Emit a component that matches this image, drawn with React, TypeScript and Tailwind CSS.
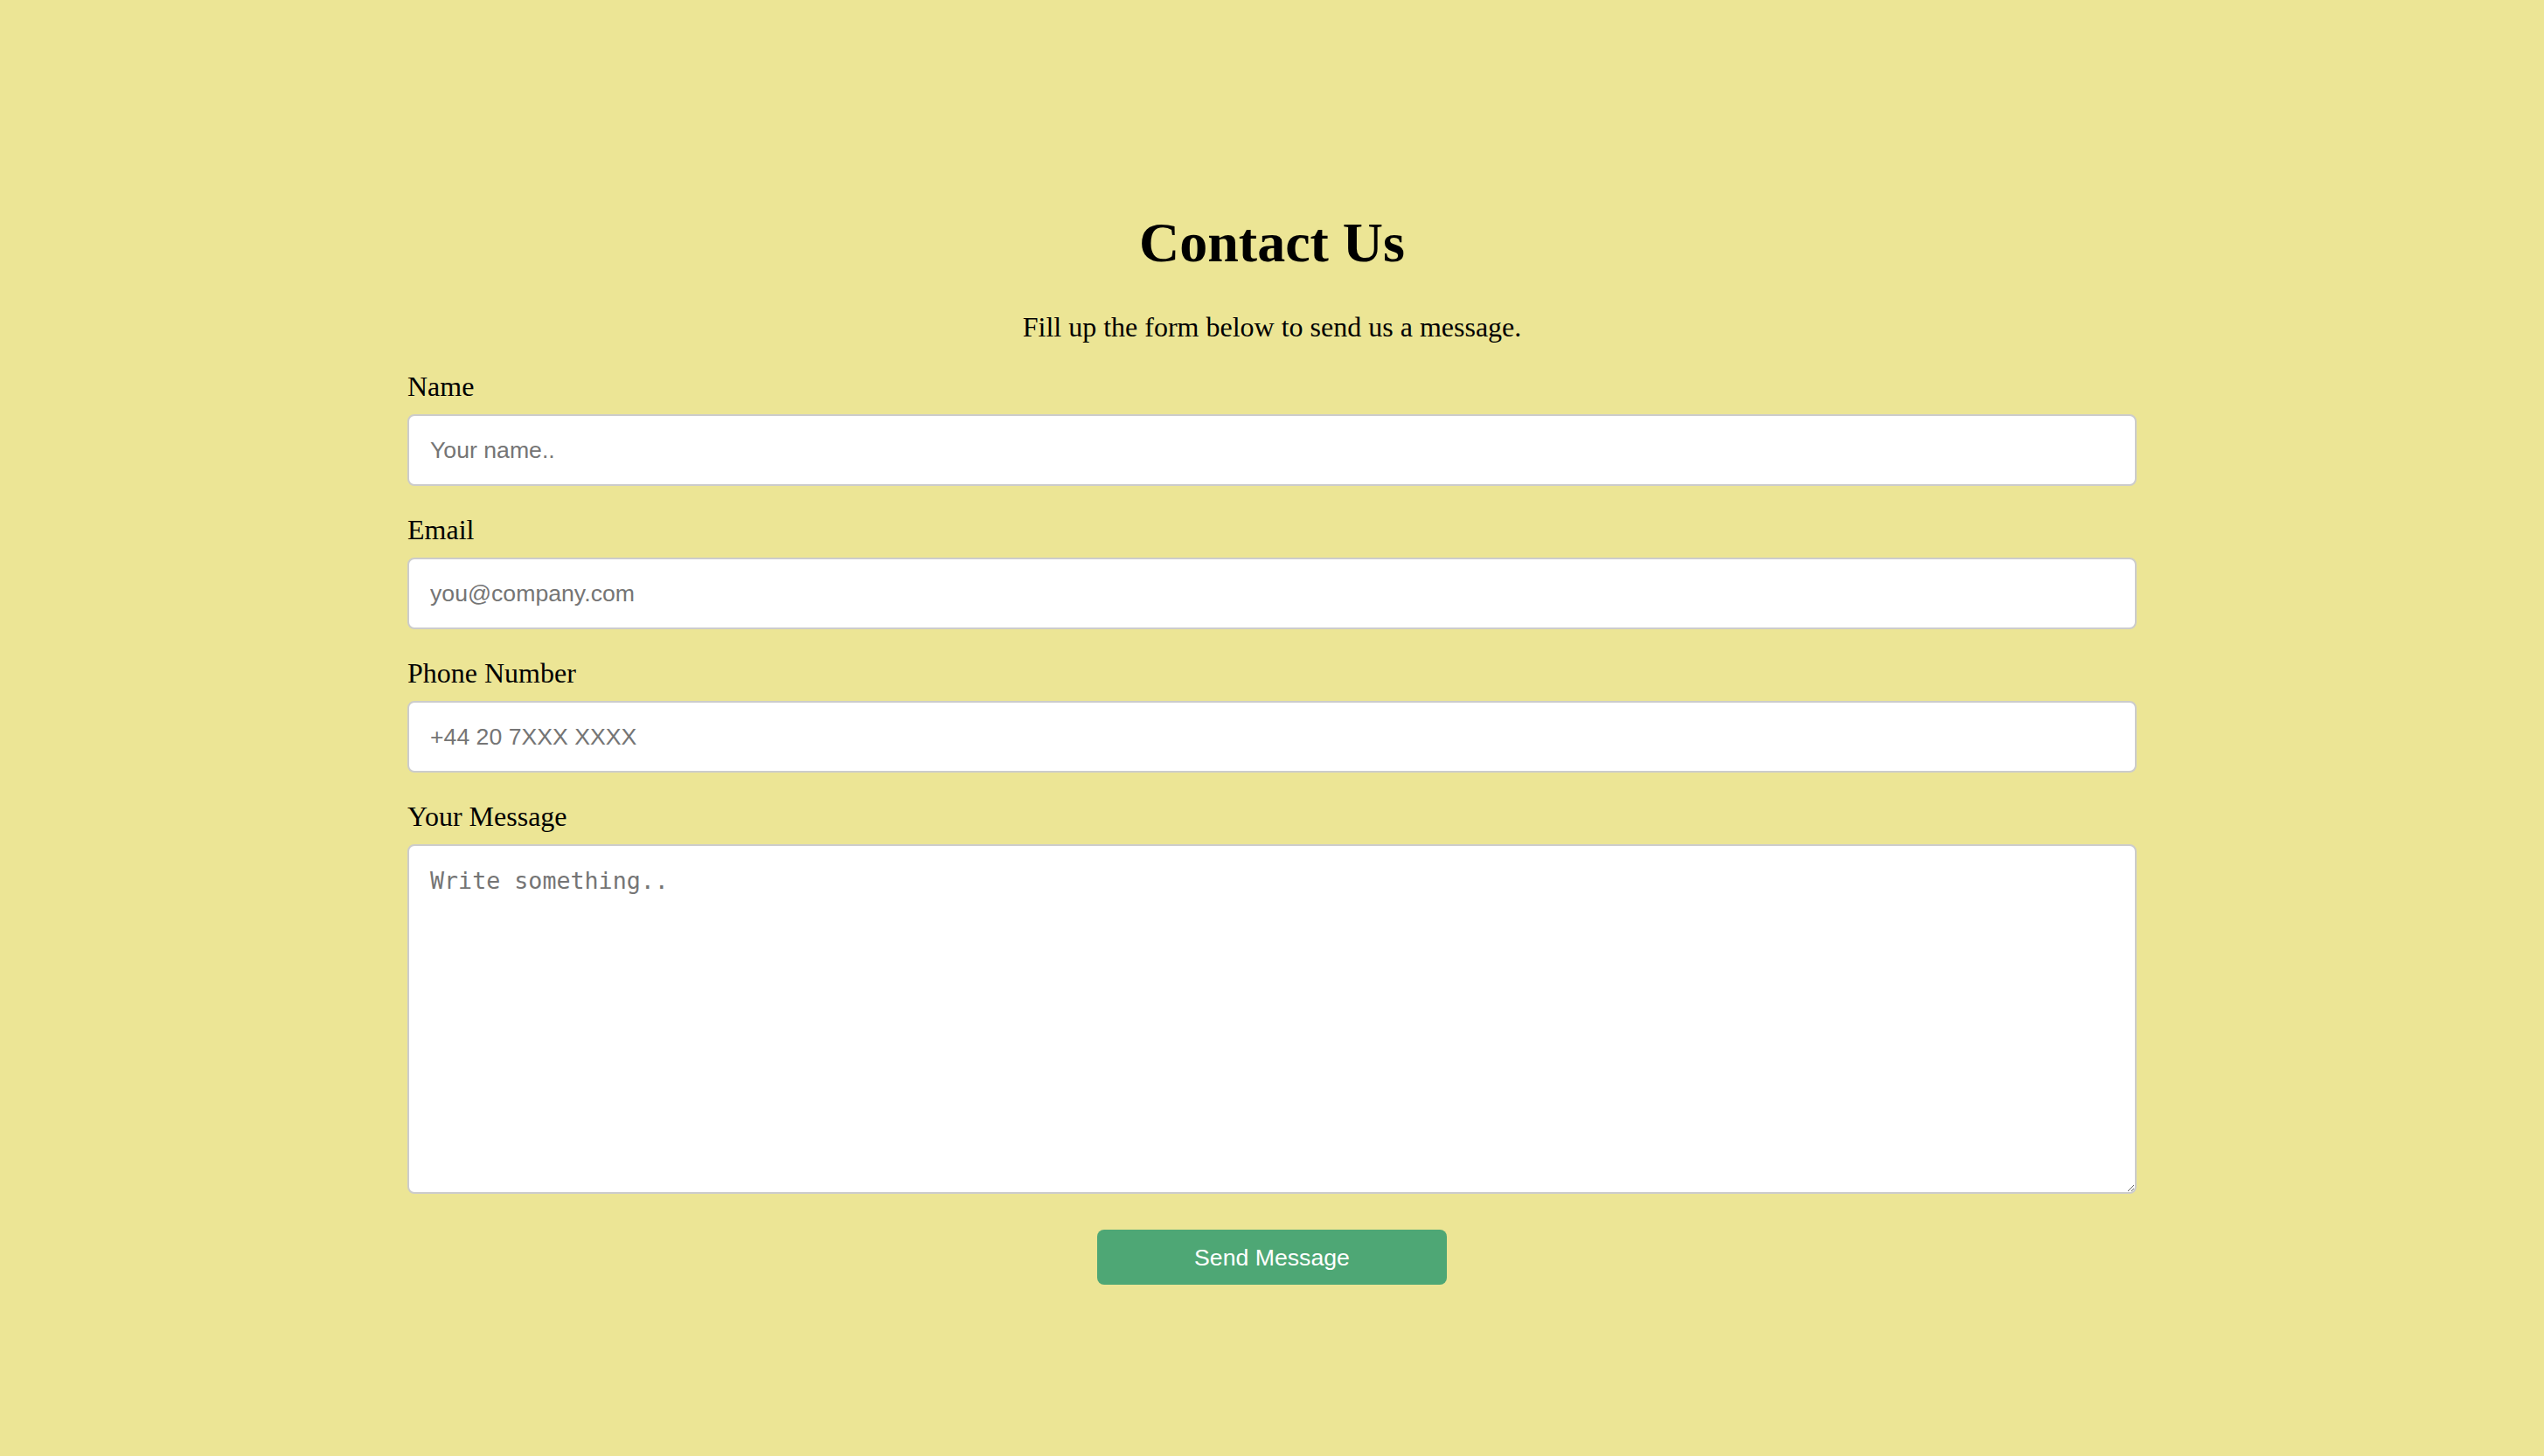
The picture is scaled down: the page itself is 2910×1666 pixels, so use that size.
import React from "react";

const serif = "font-['Liberation_Serif','Times_New_Roman',serif]";

function Field({ label, placeholder }: { label: string; placeholder: string }) {
  return (
    <div className="mb-[32px] flex flex-col">
      <label className={`${serif} text-[32px] leading-[37px] text-black`}>{label}</label>
      <input
        type="text"
        placeholder={placeholder}
        className="mt-[13px] h-[82px] w-full rounded-[8px] border-2 border-[#cccccc] bg-white px-[24px] font-['Liberation_Sans',Arial,sans-serif] text-[26.67px] text-black outline-none placeholder:text-[#757575]"
      />
    </div>
  );
}

export default function App() {
  return (
    <div className="min-h-screen w-full bg-[#ece595] pt-[241px]">
      <div className="mx-auto flex w-[1978px] flex-col">
        <h1 className={`${serif} text-center text-[64px] font-bold leading-[74px] text-black`}>Contact Us</h1>
        <p className={`${serif} mt-[41px] text-center text-[32px] leading-[37px] text-black`}>
          Fill up the form below to send us a message.
        </p>
        <form className="mt-[31px] flex flex-col" onSubmit={(e) => e.preventDefault()}>
          <Field label="Name" placeholder="Your name.." />
          <Field label="Email" placeholder="you@company.com" />
          <Field label="Phone Number" placeholder="+44 20 7XXX XXXX" />
          <div className="flex flex-col">
            <label className={`${serif} text-[32px] leading-[37px] text-black`}>Your Message</label>
            <textarea
              placeholder="Write something.."
              className="mt-[13px] h-[400px] w-full resize-y rounded-[8px] border-2 border-[#cccccc] bg-white px-[24px] py-[24px] font-['DejaVu_Sans_Mono',monospace] text-[26.67px] leading-[32px] text-black outline-none placeholder:text-[#757575]"
            />
          </div>
          <button
            type="submit"
            className="mx-auto mt-[41px] h-[63px] w-[400px] rounded-[8px] bg-[#4ea775] font-['Liberation_Sans',Arial,sans-serif] text-[26.67px] text-white"
          >
            Send Message
          </button>
        </form>
      </div>
    </div>
  );
}
